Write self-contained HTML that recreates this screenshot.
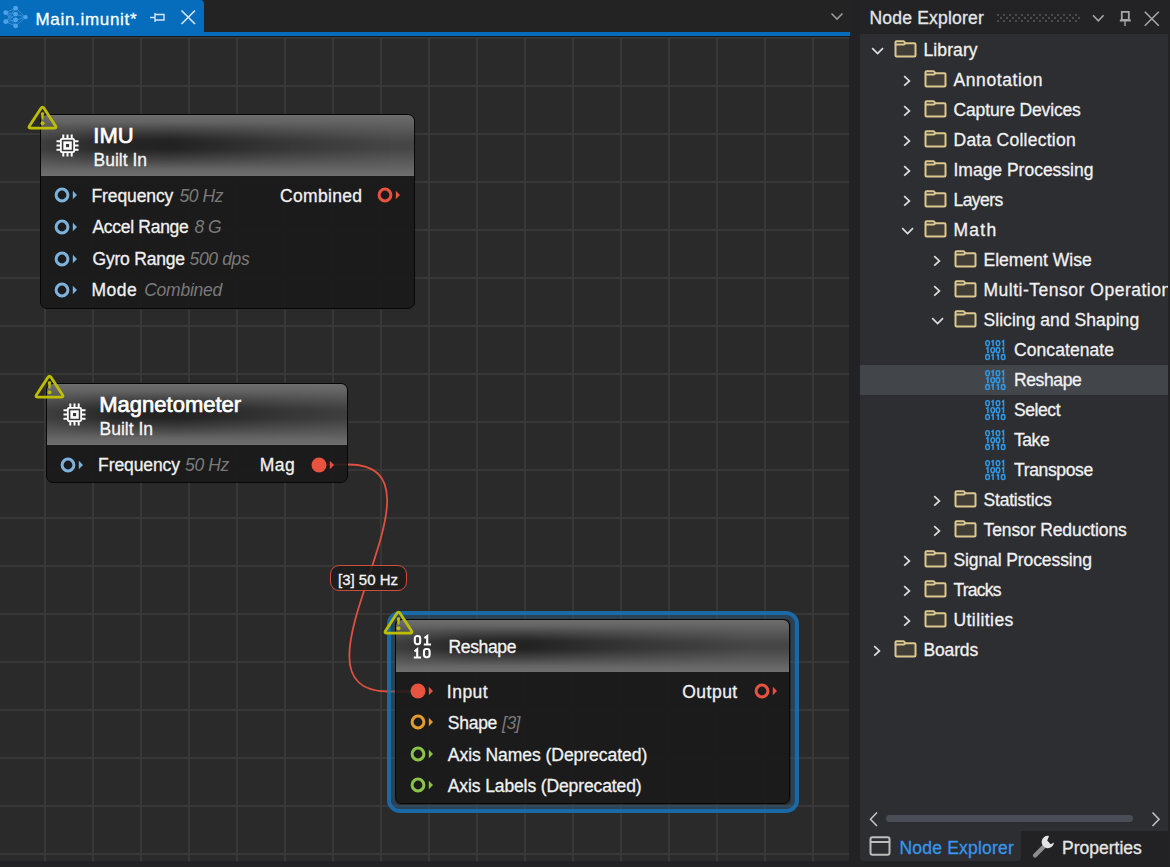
<!DOCTYPE html>
<html><head><meta charset="utf-8"><style>
*{box-sizing:border-box;margin:0;padding:0}
html,body{width:1170px;height:867px;overflow:hidden;background:#222224;font-family:"Liberation Sans",sans-serif;color:#f1f1f1}
.a{position:absolute}
.t{position:absolute;white-space:pre;line-height:1;-webkit-text-stroke-width:0.3px}
.t i,.t .v{-webkit-text-stroke-width:0}
svg{position:absolute;overflow:visible}
</style></head><body>
<div class="a" style="left:0;top:0;width:850px;height:37px;background:#232323"></div>
<div class="a" style="left:0;top:0;width:204px;height:33px;background:#066dbd;border-top-right-radius:4px"></div>
<div class="a" style="left:0;top:32px;width:850px;height:4px;background:#066dbd"></div>
<div class="a" style="left:0;top:36px;width:850px;height:1px;background:#1a1a1a"></div>
<svg style="left:0;top:0" width="32" height="32" viewBox="0 0 32 32"><g stroke="#3d8fd6" stroke-width="1"><line x1="5.7" y1="12.7" x2="15.6" y2="8.2"/><line x1="5.7" y1="12.7" x2="15.6" y2="14.1"/><line x1="5.7" y1="12.7" x2="15.6" y2="20"/><line x1="5.7" y1="12.7" x2="15.6" y2="25.9"/><line x1="5.7" y1="21.7" x2="15.6" y2="8.2"/><line x1="5.7" y1="21.7" x2="15.6" y2="14.1"/><line x1="5.7" y1="21.7" x2="15.6" y2="20"/><line x1="5.7" y1="21.7" x2="15.6" y2="25.9"/><line x1="15.6" y1="8.2" x2="25.6" y2="17.2"/><line x1="15.6" y1="14.1" x2="25.6" y2="17.2"/><line x1="15.6" y1="20" x2="25.6" y2="17.2"/><line x1="15.6" y1="25.9" x2="25.6" y2="17.2"/></g><g fill="#4ea3e8"><circle cx="5.7" cy="12.7" r="2.4"/><circle cx="5.7" cy="21.7" r="2.4"/><circle cx="15.6" cy="8.2" r="2.4"/><circle cx="15.6" cy="14.1" r="2.4"/><circle cx="15.6" cy="20" r="2.4"/><circle cx="15.6" cy="25.9" r="2.4"/><circle cx="25.6" cy="17.2" r="2.1"/></g></svg>
<div class="t" style="left:35.50px;top:10.61px;font-size:17px;color:#ffffff;font-weight:400;font-style:normal;letter-spacing:0.68px">Main.imunit*</div>
<svg style="left:148px;top:10px" width="20" height="16" viewBox="0 0 20 16"><g stroke="#d6e6f5" stroke-width="1.4" fill="none"><path d="M2 7.5H7"/><path d="M7 3V12"/><path d="M7 4.5H16V10H7"/></g></svg>
<svg style="left:179.5px;top:9.3px" width="17" height="17" viewBox="0 0 17 17"><g stroke="#d6e6f5" stroke-width="1.6"><path d="M1.5 1.5L15 15M15 1.5L1.5 15"/></g></svg>
<svg style="left:830px;top:12px" width="14" height="10" viewBox="0 0 14 10"><path d="M1.5 1.5L7 7L12.5 1.5" stroke="#9a9a9a" stroke-width="1.6" fill="none"/></svg>
<div class="a" style="left:0;top:37px;width:848.5px;height:824px;background-color:#2a2a2a;background-image:linear-gradient(to right,#373737 2px,transparent 2px),linear-gradient(to bottom,#373737 2px,transparent 2px);background-size:48px 48px;background-position:44px 0px"></div>
<svg style="left:0;top:0" width="850" height="867" viewBox="0 0 850 867"><path d="M318.5 464.5H348.5C464 464.5 272.5 691.5 388 691.5H418" stroke="#e0503e" stroke-width="1.8" fill="none"/></svg>
<div class="a" style="left:39.5px;top:114px;width:375.5px;height:194.5px;border-radius:7px;border:1px solid #070707;background:rgba(24,24,24,0.86);overflow:hidden"><div class="a" style="left:0;top:0;width:100%;height:61px;background:linear-gradient(to bottom,rgba(122,122,122,0.87) 0%,rgba(76,76,76,0.87) 45%,rgba(76,76,76,0.87) 55%,rgba(124,124,124,0.87) 100%)"></div><div class="a" style="left:0;top:0;width:100%;height:61px;background:linear-gradient(to right,rgba(0,0,0,0.1) 0px,rgba(0,0,0,0.45) 70px,rgba(0,0,0,0.5) 130px,rgba(0,0,0,0.22) 240px,rgba(0,0,0,0) 350px);-webkit-mask-image:linear-gradient(to bottom,transparent 12%,#000 40%,#000 56%,transparent 88%)"></div></div>
<div class="a" style="left:46px;top:383px;width:301.5px;height:99.5px;border-radius:7px;border:1px solid #070707;background:rgba(24,24,24,0.86);overflow:hidden"><div class="a" style="left:0;top:0;width:100%;height:61px;background:linear-gradient(to bottom,rgba(122,122,122,0.87) 0%,rgba(76,76,76,0.87) 45%,rgba(76,76,76,0.87) 55%,rgba(124,124,124,0.87) 100%)"></div><div class="a" style="left:0;top:0;width:100%;height:61px;background:linear-gradient(to right,rgba(0,0,0,0.1) 0px,rgba(0,0,0,0.45) 70px,rgba(0,0,0,0.5) 130px,rgba(0,0,0,0.22) 240px,rgba(0,0,0,0) 350px);-webkit-mask-image:linear-gradient(to bottom,transparent 12%,#000 40%,#000 56%,transparent 88%)"></div></div>
<div class="a" style="left:386.5px;top:610.5px;width:412px;height:202px;border-radius:13px;border:4px solid rgba(24,116,186,0.85);background:transparent"></div>
<div class="a" style="left:390.5px;top:614.5px;width:404px;height:194px;border-radius:9px;border:4.5px solid rgba(40,95,140,0.45)"></div>
<div class="a" style="left:395px;top:619px;width:395px;height:185px;border-radius:7px;border:1px solid #070707;background:rgba(24,24,24,0.86);overflow:hidden"><div class="a" style="left:0;top:0;width:100%;height:52px;background:linear-gradient(to bottom,rgba(122,122,122,0.87) 0%,rgba(76,76,76,0.87) 45%,rgba(76,76,76,0.87) 55%,rgba(124,124,124,0.87) 100%)"></div><div class="a" style="left:0;top:0;width:100%;height:52px;background:linear-gradient(to right,rgba(0,0,0,0.1) 0px,rgba(0,0,0,0.45) 70px,rgba(0,0,0,0.5) 130px,rgba(0,0,0,0.22) 240px,rgba(0,0,0,0) 350px);-webkit-mask-image:linear-gradient(to bottom,transparent 12%,#000 40%,#000 56%,transparent 88%)"></div></div>
<svg style="left:56px;top:134px" width="23" height="23" viewBox="0 0 23 23"><g stroke="#ffffff" fill="none"><rect x="4.85" y="4.85" width="13.3" height="13.3" rx="1.2" stroke-width="1.8"/><rect x="8.65" y="8.65" width="5.8" height="5.8" stroke-width="2.6"/><path d="M7.3 0.5V4M7.3 19V22.5M0.5 7.3H4M19 7.3H22.5" stroke-width="2"/><path d="M11.5 0.5V4M11.5 19V22.5M0.5 11.5H4M19 11.5H22.5" stroke-width="2"/><path d="M15.7 0.5V4M15.7 19V22.5M0.5 15.7H4M19 15.7H22.5" stroke-width="2"/></g></svg>
<div class="t" style="left:93.30px;top:124.58px;font-size:22px;color:#ffffff;font-weight:400;font-style:normal;-webkit-text-stroke-width:0.7px">IMU</div>
<div class="t" style="left:93.50px;top:152.39px;font-size:17.5px;color:#f4f4f4;font-weight:400;font-style:normal;">Built In</div>
<svg style="left:52px;top:185.4px" width="30" height="20" viewBox="0 0 30 20"><circle cx="10" cy="10" r="5.9" fill="none" stroke="#7db2dd" stroke-width="3"/><path d="M20.8 5.7L25 10L20.8 14.3Z" fill="#7db2dd"/></svg>
<div class="t" style="left:91.50px;top:187.99px;font-size:17.5px;color:#f1f1f1;letter-spacing:-0.104px">Frequency</div>
<div class="t v" style="left:179.40px;top:187.99px;font-size:17.5px;font-style:italic;color:#7a7a7a;letter-spacing:-0.391px;-webkit-text-stroke-width:0">50 Hz</div>
<svg style="left:52px;top:217.07px" width="30" height="20" viewBox="0 0 30 20"><circle cx="10" cy="10" r="5.9" fill="none" stroke="#7db2dd" stroke-width="3"/><path d="M20.8 5.7L25 10L20.8 14.3Z" fill="#7db2dd"/></svg>
<div class="t" style="left:92.50px;top:219.49px;font-size:17.5px;color:#f1f1f1;letter-spacing:-0.299px">Accel Range</div>
<div class="t v" style="left:194.40px;top:219.49px;font-size:17.5px;font-style:italic;color:#7a7a7a;letter-spacing:-0.447px;-webkit-text-stroke-width:0">8 G</div>
<svg style="left:52px;top:248.74px" width="30" height="20" viewBox="0 0 30 20"><circle cx="10" cy="10" r="5.9" fill="none" stroke="#7db2dd" stroke-width="3"/><path d="M20.8 5.7L25 10L20.8 14.3Z" fill="#7db2dd"/></svg>
<div class="t" style="left:92.50px;top:250.99px;font-size:17.5px;color:#f1f1f1;letter-spacing:-0.213px">Gyro Range</div>
<div class="t v" style="left:189.60px;top:250.99px;font-size:17.5px;font-style:italic;color:#7a7a7a;letter-spacing:-0.371px;-webkit-text-stroke-width:0">500 dps</div>
<svg style="left:52px;top:280.41px" width="30" height="20" viewBox="0 0 30 20"><circle cx="10" cy="10" r="5.9" fill="none" stroke="#7db2dd" stroke-width="3"/><path d="M20.8 5.7L25 10L20.8 14.3Z" fill="#7db2dd"/></svg>
<div class="t" style="left:91.50px;top:282.49px;font-size:17.5px;color:#f1f1f1;letter-spacing:0.5px">Mode</div>
<div class="t v" style="left:144.20px;top:282.49px;font-size:17.5px;font-style:italic;color:#7a7a7a;letter-spacing:-0.248px;-webkit-text-stroke-width:0">Combined</div>
<svg style="left:375.2px;top:185.4px" width="30" height="20" viewBox="0 0 30 20"><circle cx="10" cy="10" r="5.9" fill="none" stroke="#e8533f" stroke-width="3"/><path d="M20.8 5.7L25 10L20.8 14.3Z" fill="#e8533f"/></svg>
<div class="t" style="left:280.00px;top:187.99px;font-size:17.5px;color:#f1f1f1;letter-spacing:0.324px">Combined</div>
<svg style="left:62.5px;top:403px" width="23" height="23" viewBox="0 0 23 23"><g stroke="#ffffff" fill="none"><rect x="4.85" y="4.85" width="13.3" height="13.3" rx="1.2" stroke-width="1.8"/><rect x="8.65" y="8.65" width="5.8" height="5.8" stroke-width="2.6"/><path d="M7.3 0.5V4M7.3 19V22.5M0.5 7.3H4M19 7.3H22.5" stroke-width="2"/><path d="M11.5 0.5V4M11.5 19V22.5M0.5 11.5H4M19 11.5H22.5" stroke-width="2"/><path d="M15.7 0.5V4M15.7 19V22.5M0.5 15.7H4M19 15.7H22.5" stroke-width="2"/></g></svg>
<div class="t" style="left:99.30px;top:393.98px;font-size:22px;color:#ffffff;font-weight:400;font-style:normal;-webkit-text-stroke-width:0.7px">Magnetometer</div>
<div class="t" style="left:99.50px;top:421.39px;font-size:17.5px;color:#f4f4f4;font-weight:400;font-style:normal;">Built In</div>
<svg style="left:57.8px;top:454.5px" width="30" height="20" viewBox="0 0 30 20"><circle cx="10" cy="10" r="5.9" fill="none" stroke="#7db2dd" stroke-width="3"/><path d="M20.8 5.7L25 10L20.8 14.3Z" fill="#7db2dd"/></svg>
<div class="t" style="left:98.10px;top:457.19px;font-size:17.5px;color:#f1f1f1;letter-spacing:-0.104px">Frequency</div>
<div class="t v" style="left:185.10px;top:457.19px;font-size:17.5px;font-style:italic;color:#7a7a7a;letter-spacing:-0.391px;-webkit-text-stroke-width:0">50 Hz</div>
<svg style="left:308.5px;top:454.5px" width="30" height="20" viewBox="0 0 30 20"><circle cx="10" cy="10" r="7.5" fill="#e8533f"/><path d="M20.8 5.7L25 10L20.8 14.3Z" fill="#e8533f"/></svg>
<div class="t" style="left:259.70px;top:457.19px;font-size:17.5px;color:#f1f1f1;letter-spacing:0.5px">Mag</div>
<svg style="left:413px;top:634px" width="20" height="25" viewBox="0 0 20 25"><g fill="none" stroke="#ffffff" stroke-width="2.1"><rect x="1.8" y="2" width="5.4" height="8.2" rx="2.4"/><path d="M11.4 4.2L14.2 2.1V10.6M10.8 10.5H18"/><path d="M1.4 17.3L4.2 15.2V23.6M0.8 23.5H8"/><rect x="11" y="15" width="5.6" height="8.2" rx="2.4"/></g></svg>
<div class="t" style="left:448.50px;top:638.99px;font-size:17.5px;color:#f4f4f4;font-weight:400;font-style:normal;letter-spacing:-0.35px">Reshape</div>
<svg style="left:408px;top:681.1px" width="30" height="20" viewBox="0 0 30 20"><circle cx="10" cy="10" r="7.5" fill="#e8533f"/><path d="M20.8 5.7L25 10L20.8 14.3Z" fill="#e8533f"/></svg>
<div class="t" style="left:446.80px;top:683.99px;font-size:17.5px;color:#f1f1f1;letter-spacing:0.5px">Input</div>
<svg style="left:408px;top:712.47px" width="30" height="20" viewBox="0 0 30 20"><circle cx="10" cy="10" r="5.9" fill="none" stroke="#e59c2c" stroke-width="3"/><path d="M20.8 5.7L25 10L20.8 14.3Z" fill="#e59c2c"/></svg>
<div class="t" style="left:447.80px;top:715.34px;font-size:17.5px;color:#f1f1f1;letter-spacing:-0.268px">Shape</div>
<div class="t v" style="left:502.10px;top:715.34px;font-size:17.5px;font-style:italic;color:#7a7a7a;letter-spacing:-0.547px;-webkit-text-stroke-width:0">[3]</div>
<svg style="left:408px;top:743.84px" width="30" height="20" viewBox="0 0 30 20"><circle cx="10" cy="10" r="5.9" fill="none" stroke="#8cc449" stroke-width="3"/><path d="M20.8 5.7L25 10L20.8 14.3Z" fill="#8cc449"/></svg>
<div class="t" style="left:447.80px;top:746.69px;font-size:17.5px;color:#f1f1f1;letter-spacing:-0.042px">Axis Names (Deprecated)</div>
<svg style="left:408px;top:775.21px" width="30" height="20" viewBox="0 0 30 20"><circle cx="10" cy="10" r="5.9" fill="none" stroke="#8cc449" stroke-width="3"/><path d="M20.8 5.7L25 10L20.8 14.3Z" fill="#8cc449"/></svg>
<div class="t" style="left:447.80px;top:778.04px;font-size:17.5px;color:#f1f1f1;letter-spacing:-0.115px">Axis Labels (Deprecated)</div>
<svg style="left:751.5px;top:681.3px" width="30" height="20" viewBox="0 0 30 20"><circle cx="10" cy="10" r="5.9" fill="none" stroke="#e8533f" stroke-width="3"/><path d="M20.8 5.7L25 10L20.8 14.3Z" fill="#e8533f"/></svg>
<div class="t" style="left:682.20px;top:683.99px;font-size:17.5px;color:#f1f1f1;letter-spacing:0.5px">Output</div>
<svg style="left:27px;top:103.7px" width="32" height="27" viewBox="0 0 32 27"><path d="M14 4.2Q15.5 2 17 4.2L28.6 21.9Q29.9 24.2 27.2 24.2H3.8Q1.1 24.2 2.4 21.9Z" stroke="#bebe00" stroke-width="2.8" stroke-linejoin="round" fill="none"/><path d="M13.9 8.8Q15.5 7.6 17.1 8.8L16.4 15.6H14.6Z" fill="#bebe00"/><circle cx="15.5" cy="19.2" r="2" fill="#bebe00"/></svg>
<svg style="left:33.5px;top:372.5px" width="32" height="27" viewBox="0 0 32 27"><path d="M14 4.2Q15.5 2 17 4.2L28.6 21.9Q29.9 24.2 27.2 24.2H3.8Q1.1 24.2 2.4 21.9Z" stroke="#bebe00" stroke-width="2.8" stroke-linejoin="round" fill="none"/><path d="M13.9 8.8Q15.5 7.6 17.1 8.8L16.4 15.6H14.6Z" fill="#bebe00"/><circle cx="15.5" cy="19.2" r="2" fill="#bebe00"/></svg>
<svg style="left:382.5px;top:609px" width="32" height="27" viewBox="0 0 32 27"><path d="M14 4.2Q15.5 2 17 4.2L28.6 21.9Q29.9 24.2 27.2 24.2H3.8Q1.1 24.2 2.4 21.9Z" stroke="#bebe00" stroke-width="2.8" stroke-linejoin="round" fill="none"/><path d="M13.9 8.8Q15.5 7.6 17.1 8.8L16.4 15.6H14.6Z" fill="#bebe00"/><circle cx="15.5" cy="19.2" r="2" fill="#bebe00"/></svg>
<div class="a" style="left:329.8px;top:565px;width:77px;height:25.5px;border:1.8px solid #cf4d3c;border-radius:9px;background:rgba(28,28,28,0.85)"></div>
<div class="t" style="left:338.00px;top:571.80px;font-size:15px;color:#f4f4f4;font-weight:400;font-style:normal;">[3] 50 Hz</div>
<div class="a" style="left:860px;top:0;width:310px;height:34px;background:#232325"></div>
<div class="t" style="left:869.50px;top:10.39px;font-size:17.5px;color:#e6e6e6;font-weight:400;font-style:normal;letter-spacing:0.2px">Node Explorer</div>
<svg style="left:996px;top:13px" width="84" height="10" viewBox="0 0 84 10"><defs><pattern id="gp" width="6" height="6" patternUnits="userSpaceOnUse"><rect x="1" y="1" width="2" height="2" fill="#4c4c4c"/><rect x="4" y="4" width="2" height="2" fill="#4c4c4c"/></pattern></defs><rect x="0" y="0" width="84" height="10" fill="url(#gp)"/></svg>
<svg style="left:1092px;top:14px" width="13" height="9" viewBox="0 0 13 9"><path d="M1 1.2L6.3 6.8L11.6 1.2" stroke="#a6a6a6" stroke-width="1.6" fill="none"/></svg>
<svg style="left:1119px;top:10px" width="13" height="17" viewBox="0 0 13 17"><g fill="none" stroke="#a6a6a6"><path d="M2.8 1.8H9.8V10H2.8Z" stroke-width="1.8"/><path d="M0.8 10.5H11.8" stroke-width="2"/><path d="M6 11V16" stroke-width="1.4"/></g></svg>
<svg style="left:1143px;top:10px" width="17" height="17" viewBox="0 0 17 17"><path d="M1.8 1.8L15.8 15.8M15.8 1.8L1.8 15.8" stroke="#a6a6a6" stroke-width="1.6"/></svg>
<div class="a" style="left:860px;top:34px;width:308px;height:797px;background:#2d2e32;overflow:hidden">
<svg style="left:10.8px;top:12.5px" width="14" height="9" viewBox="0 0 14 9"><path d="M1.2 1.2L6.6 6.6L12 1.2" stroke="#dedede" stroke-width="1.7" fill="none"/></svg>
<svg style="left:33.5px;top:6px" width="23" height="18" viewBox="0 0 23 18"><path d="M1.5 4H21.5V16.5H1.5Z" fill="#403e37"/><g fill="none" stroke="#dcc78e" stroke-width="2" stroke-linejoin="round"><path d="M1.5 4.5V2.3Q1.5 1.2 2.6 1.2H9.6L11.4 3.2H20.4Q21.5 3.2 21.5 4.3V15.4Q21.5 16.5 20.4 16.5H2.6Q1.5 16.5 1.5 15.4Z"/><path d="M1.5 4.6H9.6L11.4 3.2"/></g></svg>
<div class="t" style="left:63.50px;top:7.99px;font-size:17.5px;color:#f1f1f1;font-weight:400;font-style:normal;letter-spacing:0.093px">Library</div>
<svg style="left:43px;top:41px" width="9" height="12" viewBox="0 0 9 12"><path d="M1.2 1.2L6.4 5.9L1.2 10.6" stroke="#dedede" stroke-width="1.7" fill="none"/></svg>
<svg style="left:63.5px;top:36px" width="23" height="18" viewBox="0 0 23 18"><path d="M1.5 4H21.5V16.5H1.5Z" fill="#403e37"/><g fill="none" stroke="#dcc78e" stroke-width="2" stroke-linejoin="round"><path d="M1.5 4.5V2.3Q1.5 1.2 2.6 1.2H9.6L11.4 3.2H20.4Q21.5 3.2 21.5 4.3V15.4Q21.5 16.5 20.4 16.5H2.6Q1.5 16.5 1.5 15.4Z"/><path d="M1.5 4.6H9.6L11.4 3.2"/></g></svg>
<div class="t" style="left:93.50px;top:37.99px;font-size:17.5px;color:#f1f1f1;font-weight:400;font-style:normal;letter-spacing:0.584px">Annotation</div>
<svg style="left:43px;top:71px" width="9" height="12" viewBox="0 0 9 12"><path d="M1.2 1.2L6.4 5.9L1.2 10.6" stroke="#dedede" stroke-width="1.7" fill="none"/></svg>
<svg style="left:63.5px;top:66px" width="23" height="18" viewBox="0 0 23 18"><path d="M1.5 4H21.5V16.5H1.5Z" fill="#403e37"/><g fill="none" stroke="#dcc78e" stroke-width="2" stroke-linejoin="round"><path d="M1.5 4.5V2.3Q1.5 1.2 2.6 1.2H9.6L11.4 3.2H20.4Q21.5 3.2 21.5 4.3V15.4Q21.5 16.5 20.4 16.5H2.6Q1.5 16.5 1.5 15.4Z"/><path d="M1.5 4.6H9.6L11.4 3.2"/></g></svg>
<div class="t" style="left:93.50px;top:67.99px;font-size:17.5px;color:#f1f1f1;font-weight:400;font-style:normal;letter-spacing:-0.144px">Capture Devices</div>
<svg style="left:43px;top:101px" width="9" height="12" viewBox="0 0 9 12"><path d="M1.2 1.2L6.4 5.9L1.2 10.6" stroke="#dedede" stroke-width="1.7" fill="none"/></svg>
<svg style="left:63.5px;top:96px" width="23" height="18" viewBox="0 0 23 18"><path d="M1.5 4H21.5V16.5H1.5Z" fill="#403e37"/><g fill="none" stroke="#dcc78e" stroke-width="2" stroke-linejoin="round"><path d="M1.5 4.5V2.3Q1.5 1.2 2.6 1.2H9.6L11.4 3.2H20.4Q21.5 3.2 21.5 4.3V15.4Q21.5 16.5 20.4 16.5H2.6Q1.5 16.5 1.5 15.4Z"/><path d="M1.5 4.6H9.6L11.4 3.2"/></g></svg>
<div class="t" style="left:93.50px;top:97.99px;font-size:17.5px;color:#f1f1f1;font-weight:400;font-style:normal;letter-spacing:0.247px">Data Collection</div>
<svg style="left:43px;top:131px" width="9" height="12" viewBox="0 0 9 12"><path d="M1.2 1.2L6.4 5.9L1.2 10.6" stroke="#dedede" stroke-width="1.7" fill="none"/></svg>
<svg style="left:63.5px;top:126px" width="23" height="18" viewBox="0 0 23 18"><path d="M1.5 4H21.5V16.5H1.5Z" fill="#403e37"/><g fill="none" stroke="#dcc78e" stroke-width="2" stroke-linejoin="round"><path d="M1.5 4.5V2.3Q1.5 1.2 2.6 1.2H9.6L11.4 3.2H20.4Q21.5 3.2 21.5 4.3V15.4Q21.5 16.5 20.4 16.5H2.6Q1.5 16.5 1.5 15.4Z"/><path d="M1.5 4.6H9.6L11.4 3.2"/></g></svg>
<div class="t" style="left:93.50px;top:127.99px;font-size:17.5px;color:#f1f1f1;font-weight:400;font-style:normal;letter-spacing:-0.009px">Image Processing</div>
<svg style="left:43px;top:161px" width="9" height="12" viewBox="0 0 9 12"><path d="M1.2 1.2L6.4 5.9L1.2 10.6" stroke="#dedede" stroke-width="1.7" fill="none"/></svg>
<svg style="left:63.5px;top:156px" width="23" height="18" viewBox="0 0 23 18"><path d="M1.5 4H21.5V16.5H1.5Z" fill="#403e37"/><g fill="none" stroke="#dcc78e" stroke-width="2" stroke-linejoin="round"><path d="M1.5 4.5V2.3Q1.5 1.2 2.6 1.2H9.6L11.4 3.2H20.4Q21.5 3.2 21.5 4.3V15.4Q21.5 16.5 20.4 16.5H2.6Q1.5 16.5 1.5 15.4Z"/><path d="M1.5 4.6H9.6L11.4 3.2"/></g></svg>
<div class="t" style="left:93.50px;top:157.99px;font-size:17.5px;color:#f1f1f1;font-weight:400;font-style:normal;letter-spacing:-0.575px">Layers</div>
<svg style="left:40.8px;top:192.5px" width="14" height="9" viewBox="0 0 14 9"><path d="M1.2 1.2L6.6 6.6L12 1.2" stroke="#dedede" stroke-width="1.7" fill="none"/></svg>
<svg style="left:63.5px;top:186px" width="23" height="18" viewBox="0 0 23 18"><path d="M1.5 4H21.5V16.5H1.5Z" fill="#403e37"/><g fill="none" stroke="#dcc78e" stroke-width="2" stroke-linejoin="round"><path d="M1.5 4.5V2.3Q1.5 1.2 2.6 1.2H9.6L11.4 3.2H20.4Q21.5 3.2 21.5 4.3V15.4Q21.5 16.5 20.4 16.5H2.6Q1.5 16.5 1.5 15.4Z"/><path d="M1.5 4.6H9.6L11.4 3.2"/></g></svg>
<div class="t" style="left:93.50px;top:187.99px;font-size:17.5px;color:#f1f1f1;font-weight:400;font-style:normal;letter-spacing:1.243px">Math</div>
<svg style="left:73px;top:221px" width="9" height="12" viewBox="0 0 9 12"><path d="M1.2 1.2L6.4 5.9L1.2 10.6" stroke="#dedede" stroke-width="1.7" fill="none"/></svg>
<svg style="left:93.5px;top:216px" width="23" height="18" viewBox="0 0 23 18"><path d="M1.5 4H21.5V16.5H1.5Z" fill="#403e37"/><g fill="none" stroke="#dcc78e" stroke-width="2" stroke-linejoin="round"><path d="M1.5 4.5V2.3Q1.5 1.2 2.6 1.2H9.6L11.4 3.2H20.4Q21.5 3.2 21.5 4.3V15.4Q21.5 16.5 20.4 16.5H2.6Q1.5 16.5 1.5 15.4Z"/><path d="M1.5 4.6H9.6L11.4 3.2"/></g></svg>
<div class="t" style="left:123.50px;top:217.99px;font-size:17.5px;color:#f1f1f1;font-weight:400;font-style:normal;letter-spacing:0.017px">Element Wise</div>
<svg style="left:73px;top:251px" width="9" height="12" viewBox="0 0 9 12"><path d="M1.2 1.2L6.4 5.9L1.2 10.6" stroke="#dedede" stroke-width="1.7" fill="none"/></svg>
<svg style="left:93.5px;top:246px" width="23" height="18" viewBox="0 0 23 18"><path d="M1.5 4H21.5V16.5H1.5Z" fill="#403e37"/><g fill="none" stroke="#dcc78e" stroke-width="2" stroke-linejoin="round"><path d="M1.5 4.5V2.3Q1.5 1.2 2.6 1.2H9.6L11.4 3.2H20.4Q21.5 3.2 21.5 4.3V15.4Q21.5 16.5 20.4 16.5H2.6Q1.5 16.5 1.5 15.4Z"/><path d="M1.5 4.6H9.6L11.4 3.2"/></g></svg>
<div class="t" style="left:123.50px;top:247.99px;font-size:17.5px;color:#f1f1f1;font-weight:400;font-style:normal;letter-spacing:0.51px">Multi-Tensor Operation</div>
<svg style="left:70.8px;top:282.5px" width="14" height="9" viewBox="0 0 14 9"><path d="M1.2 1.2L6.6 6.6L12 1.2" stroke="#dedede" stroke-width="1.7" fill="none"/></svg>
<svg style="left:93.5px;top:276px" width="23" height="18" viewBox="0 0 23 18"><path d="M1.5 4H21.5V16.5H1.5Z" fill="#403e37"/><g fill="none" stroke="#dcc78e" stroke-width="2" stroke-linejoin="round"><path d="M1.5 4.5V2.3Q1.5 1.2 2.6 1.2H9.6L11.4 3.2H20.4Q21.5 3.2 21.5 4.3V15.4Q21.5 16.5 20.4 16.5H2.6Q1.5 16.5 1.5 15.4Z"/><path d="M1.5 4.6H9.6L11.4 3.2"/></g></svg>
<div class="t" style="left:123.50px;top:277.99px;font-size:17.5px;color:#f1f1f1;font-weight:400;font-style:normal;letter-spacing:0.052px">Slicing and Shaping</div>
<svg style="left:125.2px;top:305.6px" width="22" height="21" viewBox="0 0 22 21"><g fill="none" stroke="#2f97e6" stroke-width="1.55"><rect x="0.80" y="0.80" width="3.5" height="4.9" rx="1.6"/><path d="M6.40 1.90L8.10 0.70V6.30"/><rect x="11.20" y="0.80" width="3.5" height="4.9" rx="1.6"/><path d="M16.80 1.90L18.50 0.70V6.30"/><path d="M1.20 8.80L2.90 7.60V13.20"/><rect x="6.00" y="7.70" width="3.5" height="4.9" rx="1.6"/><rect x="11.20" y="7.70" width="3.5" height="4.9" rx="1.6"/><path d="M16.80 8.80L18.50 7.60V13.20"/><rect x="0.80" y="14.60" width="3.5" height="4.9" rx="1.6"/><path d="M6.40 15.70L8.10 14.50V20.10"/><path d="M11.60 15.70L13.30 14.50V20.10"/><rect x="16.40" y="14.60" width="3.5" height="4.9" rx="1.6"/></g></svg>
<div class="t" style="left:154.00px;top:307.99px;font-size:17.5px;color:#f1f1f1;font-weight:400;font-style:normal;letter-spacing:0.079px">Concatenate</div>
<div class="a" style="left:0;top:331px;width:308px;height:30px;background:#42454a"></div>
<svg style="left:125.2px;top:335.6px" width="22" height="21" viewBox="0 0 22 21"><g fill="none" stroke="#2f97e6" stroke-width="1.55"><rect x="0.80" y="0.80" width="3.5" height="4.9" rx="1.6"/><path d="M6.40 1.90L8.10 0.70V6.30"/><rect x="11.20" y="0.80" width="3.5" height="4.9" rx="1.6"/><path d="M16.80 1.90L18.50 0.70V6.30"/><path d="M1.20 8.80L2.90 7.60V13.20"/><rect x="6.00" y="7.70" width="3.5" height="4.9" rx="1.6"/><rect x="11.20" y="7.70" width="3.5" height="4.9" rx="1.6"/><path d="M16.80 8.80L18.50 7.60V13.20"/><rect x="0.80" y="14.60" width="3.5" height="4.9" rx="1.6"/><path d="M6.40 15.70L8.10 14.50V20.10"/><path d="M11.60 15.70L13.30 14.50V20.10"/><rect x="16.40" y="14.60" width="3.5" height="4.9" rx="1.6"/></g></svg>
<div class="t" style="left:154.00px;top:337.99px;font-size:17.5px;color:#f1f1f1;font-weight:400;font-style:normal;letter-spacing:-0.386px">Reshape</div>
<svg style="left:125.2px;top:365.6px" width="22" height="21" viewBox="0 0 22 21"><g fill="none" stroke="#2f97e6" stroke-width="1.55"><rect x="0.80" y="0.80" width="3.5" height="4.9" rx="1.6"/><path d="M6.40 1.90L8.10 0.70V6.30"/><rect x="11.20" y="0.80" width="3.5" height="4.9" rx="1.6"/><path d="M16.80 1.90L18.50 0.70V6.30"/><path d="M1.20 8.80L2.90 7.60V13.20"/><rect x="6.00" y="7.70" width="3.5" height="4.9" rx="1.6"/><rect x="11.20" y="7.70" width="3.5" height="4.9" rx="1.6"/><path d="M16.80 8.80L18.50 7.60V13.20"/><rect x="0.80" y="14.60" width="3.5" height="4.9" rx="1.6"/><path d="M6.40 15.70L8.10 14.50V20.10"/><path d="M11.60 15.70L13.30 14.50V20.10"/><rect x="16.40" y="14.60" width="3.5" height="4.9" rx="1.6"/></g></svg>
<div class="t" style="left:154.00px;top:367.99px;font-size:17.5px;color:#f1f1f1;font-weight:400;font-style:normal;letter-spacing:-0.415px">Select</div>
<svg style="left:125.2px;top:395.6px" width="22" height="21" viewBox="0 0 22 21"><g fill="none" stroke="#2f97e6" stroke-width="1.55"><rect x="0.80" y="0.80" width="3.5" height="4.9" rx="1.6"/><path d="M6.40 1.90L8.10 0.70V6.30"/><rect x="11.20" y="0.80" width="3.5" height="4.9" rx="1.6"/><path d="M16.80 1.90L18.50 0.70V6.30"/><path d="M1.20 8.80L2.90 7.60V13.20"/><rect x="6.00" y="7.70" width="3.5" height="4.9" rx="1.6"/><rect x="11.20" y="7.70" width="3.5" height="4.9" rx="1.6"/><path d="M16.80 8.80L18.50 7.60V13.20"/><rect x="0.80" y="14.60" width="3.5" height="4.9" rx="1.6"/><path d="M6.40 15.70L8.10 14.50V20.10"/><path d="M11.60 15.70L13.30 14.50V20.10"/><rect x="16.40" y="14.60" width="3.5" height="4.9" rx="1.6"/></g></svg>
<div class="t" style="left:154.00px;top:397.99px;font-size:17.5px;color:#f1f1f1;font-weight:400;font-style:normal;letter-spacing:-0.444px">Take</div>
<svg style="left:125.2px;top:425.6px" width="22" height="21" viewBox="0 0 22 21"><g fill="none" stroke="#2f97e6" stroke-width="1.55"><rect x="0.80" y="0.80" width="3.5" height="4.9" rx="1.6"/><path d="M6.40 1.90L8.10 0.70V6.30"/><rect x="11.20" y="0.80" width="3.5" height="4.9" rx="1.6"/><path d="M16.80 1.90L18.50 0.70V6.30"/><path d="M1.20 8.80L2.90 7.60V13.20"/><rect x="6.00" y="7.70" width="3.5" height="4.9" rx="1.6"/><rect x="11.20" y="7.70" width="3.5" height="4.9" rx="1.6"/><path d="M16.80 8.80L18.50 7.60V13.20"/><rect x="0.80" y="14.60" width="3.5" height="4.9" rx="1.6"/><path d="M6.40 15.70L8.10 14.50V20.10"/><path d="M11.60 15.70L13.30 14.50V20.10"/><rect x="16.40" y="14.60" width="3.5" height="4.9" rx="1.6"/></g></svg>
<div class="t" style="left:154.00px;top:427.99px;font-size:17.5px;color:#f1f1f1;font-weight:400;font-style:normal;letter-spacing:-0.362px">Transpose</div>
<svg style="left:73px;top:461px" width="9" height="12" viewBox="0 0 9 12"><path d="M1.2 1.2L6.4 5.9L1.2 10.6" stroke="#dedede" stroke-width="1.7" fill="none"/></svg>
<svg style="left:93.5px;top:456px" width="23" height="18" viewBox="0 0 23 18"><path d="M1.5 4H21.5V16.5H1.5Z" fill="#403e37"/><g fill="none" stroke="#dcc78e" stroke-width="2" stroke-linejoin="round"><path d="M1.5 4.5V2.3Q1.5 1.2 2.6 1.2H9.6L11.4 3.2H20.4Q21.5 3.2 21.5 4.3V15.4Q21.5 16.5 20.4 16.5H2.6Q1.5 16.5 1.5 15.4Z"/><path d="M1.5 4.6H9.6L11.4 3.2"/></g></svg>
<div class="t" style="left:123.50px;top:457.99px;font-size:17.5px;color:#f1f1f1;font-weight:400;font-style:normal;letter-spacing:-0.196px">Statistics</div>
<svg style="left:73px;top:491px" width="9" height="12" viewBox="0 0 9 12"><path d="M1.2 1.2L6.4 5.9L1.2 10.6" stroke="#dedede" stroke-width="1.7" fill="none"/></svg>
<svg style="left:93.5px;top:486px" width="23" height="18" viewBox="0 0 23 18"><path d="M1.5 4H21.5V16.5H1.5Z" fill="#403e37"/><g fill="none" stroke="#dcc78e" stroke-width="2" stroke-linejoin="round"><path d="M1.5 4.5V2.3Q1.5 1.2 2.6 1.2H9.6L11.4 3.2H20.4Q21.5 3.2 21.5 4.3V15.4Q21.5 16.5 20.4 16.5H2.6Q1.5 16.5 1.5 15.4Z"/><path d="M1.5 4.6H9.6L11.4 3.2"/></g></svg>
<div class="t" style="left:123.50px;top:487.99px;font-size:17.5px;color:#f1f1f1;font-weight:400;font-style:normal;letter-spacing:-0.099px">Tensor Reductions</div>
<svg style="left:43px;top:521px" width="9" height="12" viewBox="0 0 9 12"><path d="M1.2 1.2L6.4 5.9L1.2 10.6" stroke="#dedede" stroke-width="1.7" fill="none"/></svg>
<svg style="left:63.5px;top:516px" width="23" height="18" viewBox="0 0 23 18"><path d="M1.5 4H21.5V16.5H1.5Z" fill="#403e37"/><g fill="none" stroke="#dcc78e" stroke-width="2" stroke-linejoin="round"><path d="M1.5 4.5V2.3Q1.5 1.2 2.6 1.2H9.6L11.4 3.2H20.4Q21.5 3.2 21.5 4.3V15.4Q21.5 16.5 20.4 16.5H2.6Q1.5 16.5 1.5 15.4Z"/><path d="M1.5 4.6H9.6L11.4 3.2"/></g></svg>
<div class="t" style="left:93.50px;top:517.99px;font-size:17.5px;color:#f1f1f1;font-weight:400;font-style:normal;letter-spacing:-0.103px">Signal Processing</div>
<svg style="left:43px;top:551px" width="9" height="12" viewBox="0 0 9 12"><path d="M1.2 1.2L6.4 5.9L1.2 10.6" stroke="#dedede" stroke-width="1.7" fill="none"/></svg>
<svg style="left:63.5px;top:546px" width="23" height="18" viewBox="0 0 23 18"><path d="M1.5 4H21.5V16.5H1.5Z" fill="#403e37"/><g fill="none" stroke="#dcc78e" stroke-width="2" stroke-linejoin="round"><path d="M1.5 4.5V2.3Q1.5 1.2 2.6 1.2H9.6L11.4 3.2H20.4Q21.5 3.2 21.5 4.3V15.4Q21.5 16.5 20.4 16.5H2.6Q1.5 16.5 1.5 15.4Z"/><path d="M1.5 4.6H9.6L11.4 3.2"/></g></svg>
<div class="t" style="left:93.50px;top:547.99px;font-size:17.5px;color:#f1f1f1;font-weight:400;font-style:normal;letter-spacing:-0.78px">Tracks</div>
<svg style="left:43px;top:581px" width="9" height="12" viewBox="0 0 9 12"><path d="M1.2 1.2L6.4 5.9L1.2 10.6" stroke="#dedede" stroke-width="1.7" fill="none"/></svg>
<svg style="left:63.5px;top:576px" width="23" height="18" viewBox="0 0 23 18"><path d="M1.5 4H21.5V16.5H1.5Z" fill="#403e37"/><g fill="none" stroke="#dcc78e" stroke-width="2" stroke-linejoin="round"><path d="M1.5 4.5V2.3Q1.5 1.2 2.6 1.2H9.6L11.4 3.2H20.4Q21.5 3.2 21.5 4.3V15.4Q21.5 16.5 20.4 16.5H2.6Q1.5 16.5 1.5 15.4Z"/><path d="M1.5 4.6H9.6L11.4 3.2"/></g></svg>
<div class="t" style="left:93.50px;top:577.99px;font-size:17.5px;color:#f1f1f1;font-weight:400;font-style:normal;letter-spacing:0.432px">Utilities</div>
<svg style="left:13px;top:611px" width="9" height="12" viewBox="0 0 9 12"><path d="M1.2 1.2L6.4 5.9L1.2 10.6" stroke="#dedede" stroke-width="1.7" fill="none"/></svg>
<svg style="left:33.5px;top:606px" width="23" height="18" viewBox="0 0 23 18"><path d="M1.5 4H21.5V16.5H1.5Z" fill="#403e37"/><g fill="none" stroke="#dcc78e" stroke-width="2" stroke-linejoin="round"><path d="M1.5 4.5V2.3Q1.5 1.2 2.6 1.2H9.6L11.4 3.2H20.4Q21.5 3.2 21.5 4.3V15.4Q21.5 16.5 20.4 16.5H2.6Q1.5 16.5 1.5 15.4Z"/><path d="M1.5 4.6H9.6L11.4 3.2"/></g></svg>
<div class="t" style="left:63.50px;top:607.99px;font-size:17.5px;color:#f1f1f1;font-weight:400;font-style:normal;letter-spacing:-0.16px">Boards</div>
</div>
<div class="a" style="left:1168px;top:0;width:2px;height:867px;background:#232325"></div>
<svg style="left:868px;top:811px" width="12" height="17" viewBox="0 0 12 17"><path d="M9 1.5L2.5 8.3L9 15" stroke="#c2c2c2" stroke-width="1.6" fill="none"/></svg>
<div class="a" style="left:886px;top:815px;width:247px;height:7px;border-radius:3.5px;background:#4b4e56"></div>
<svg style="left:1149.5px;top:811px" width="12" height="17" viewBox="0 0 12 17"><path d="M2.5 1.5L9 8.3L2.5 15" stroke="#c2c2c2" stroke-width="1.6" fill="none"/></svg>
<div class="a" style="left:860px;top:831px;width:161px;height:30px;background:#2d2e32;border-bottom-left-radius:4px;border-bottom-right-radius:4px"></div>
<svg style="left:868px;top:835px" width="24" height="22" viewBox="0 0 24 22"><g fill="none" stroke="#bdbdbd" stroke-width="2"><rect x="2.5" y="2.3" width="19" height="17.5" rx="2"/><path d="M2.5 7H21.5"/></g></svg>
<div class="t" style="left:899.50px;top:840.19px;font-size:17.5px;color:#3796e8;font-weight:400;font-style:normal;letter-spacing:0.2px">Node Explorer</div>
<svg style="left:1030px;top:834px" width="26" height="24" viewBox="0 0 26 24"><path d="M5 21.5L15 11.5" stroke="#8e8e8e" stroke-width="4.2" stroke-linecap="round"/><path d="M18.5 1.8A6.2 6.2 0 1 0 24 8.6L20.6 10.2L17.2 6.6L18.9 2.5Z" fill="#e4e4e4"/></svg>
<div class="t" style="left:1062.00px;top:840.19px;font-size:17.5px;color:#e6e6e6;font-weight:400;font-style:normal;">Properties</div>
</body></html>
